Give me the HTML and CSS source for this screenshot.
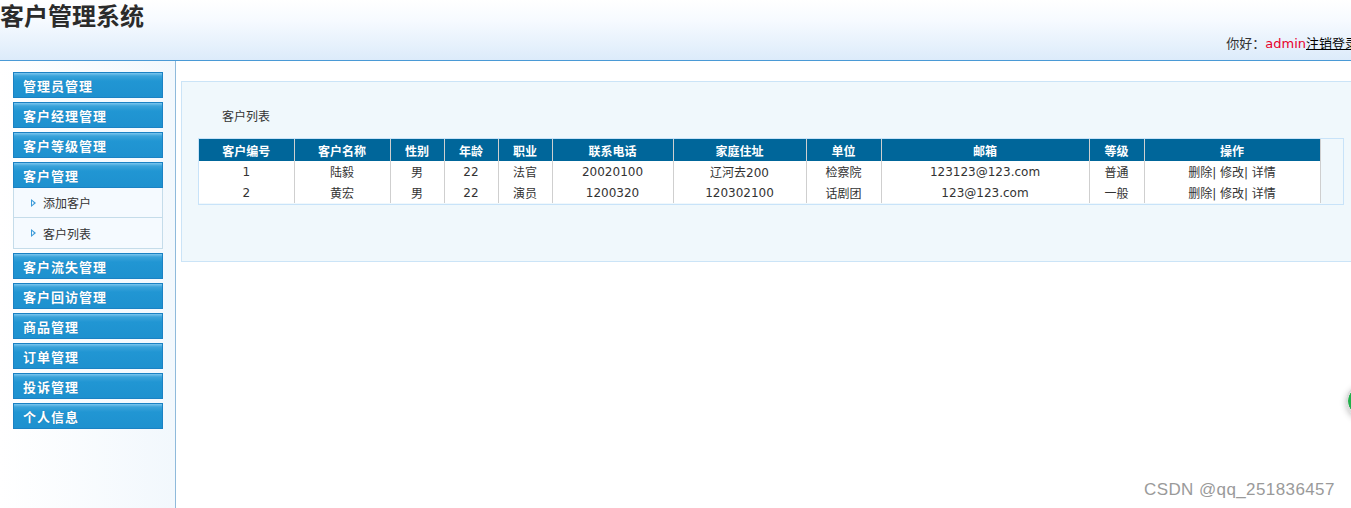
FILE: index.html
```html
<!DOCTYPE html>
<html lang="zh">
<head>
<meta charset="utf-8">
<title>客户管理系统</title>
<link rel="stylesheet" href="styles.css">
</head>
<body>
<div class="header">
  <h1 class="title">客户管理系统</h1>
  <div class="userbar"><span class="userinfo">你好：<span class="uname">admin</span><a class="logout">注销登录</a></span></div>
</div>
<div class="layout">
  <div class="sidebar">
    <div class="menu">管理员管理</div>
    <div class="menu">客户经理管理</div>
    <div class="menu">客户等级管理</div>
    <div class="menu">客户管理</div>
    <div class="submenu">
      <div class="subitem"><span class="tri"></span>添加客户</div>
      <div class="subitem"><span class="tri"></span>客户列表</div>
    </div>
    <div class="menu">客户流失管理</div>
    <div class="menu">客户回访管理</div>
    <div class="menu">商品管理</div>
    <div class="menu">订单管理</div>
    <div class="menu">投诉管理</div>
    <div class="menu">个人信息</div>
  </div>
  <div class="main">
    <div class="panel">
      <div class="panel-title">客户列表</div>
      <div class="tablewrap">
        <table class="grid">
          <colgroup>
            <col class="c95"><col class="c96"><col class="c54"><col class="c54"><col class="c54"><col class="c121"><col class="c133"><col class="c75"><col class="c208"><col class="c55"><col class="c176">
          </colgroup>
          <thead>
            <tr><th>客户编号</th><th>客户名称</th><th>性别</th><th>年龄</th><th>职业</th><th>联系电话</th><th>家庭住址</th><th>单位</th><th>邮箱</th><th>等级</th><th>操作</th></tr>
          </thead>
          <tbody>
            <tr><td>1</td><td>陆毅</td><td>男</td><td>22</td><td>法官</td><td>20020100</td><td>辽河去200</td><td>检察院</td><td>123123@123.com</td><td>普通</td><td>删除| 修改| 详情</td></tr>
            <tr><td>2</td><td>黄宏</td><td>男</td><td>22</td><td>演员</td><td>1200320</td><td>120302100</td><td>话剧团</td><td>123@123.com</td><td>一般</td><td>删除| 修改| 详情</td></tr>
          </tbody>
        </table>
      </div>
    </div>
  </div>
</div>
<div class="floatbtn"></div>
<div class="watermark">CSDN @qq_251836457</div>
</body>
</html>
```
FILE: styles.css
```css
html, body {
  margin: 0;
  padding: 0;
  height: 100%;
  overflow: hidden;
}
body {
  font-family: "DejaVu Sans", "Noto Sans CJK SC", sans-serif;
  font-size: 12px;
  color: #333;
  background: #fff;
  position: relative;
}
.header {
  height: 60px;
  border-bottom: 1px solid #4a9ad6;
  background: linear-gradient(#ffffff 0%, #f6faff 35%, #dcebfa 100%);
  overflow: hidden;
  display: flex;
  flex-direction: column;
}
.title {
  margin: 0;
  padding-top: 1px;
  font-family: "Noto Sans CJK SC", sans-serif;
  font-size: 24px;
  font-weight: bold;
  line-height: 28px;
  color: #2b2b2b;
}
.userbar {
  display: flex;
  justify-content: flex-end;
  margin-top: 5px;
  white-space: nowrap;
}
.userinfo {
  font-family: "Noto Sans CJK SC", sans-serif;
  font-size: 13px;
  line-height: 18px;
  color: #333;
  margin-right: -7px;
}
.uname {
  font-family: "DejaVu Sans", sans-serif;
  color: #e8002c;
  font-size: 13px;
}
.logout {
  color: #000;
  text-decoration: underline;
}
.layout {
  display: flex;
  height: calc(100% - 61px);
}
.sidebar {
  width: 162px;
  flex: none;
  padding: 11px 0 0 13px;
  border-right: 1px solid #8fbadb;
  background: linear-gradient(to right, #ffffff 0%, #f2f8fd 100%);
  display: flex;
  flex-direction: column;
  gap: 4px;
}
.menu {
  height: 24px;
  width: 139px;
  border: 1px solid #1b82c4;
  background: linear-gradient(#7cc6ee 0px, #3aa3da 3px, #2196d3 8px, #1e91cf 100%);
  color: #fff;
  font-family: "Noto Sans CJK SC", sans-serif;
  font-weight: bold;
  font-size: 13px;
  letter-spacing: 1px;
  line-height: 26px;
  padding-left: 9px;
  text-shadow: 0 0 1px rgba(0, 40, 90, 0.35);
}
.submenu {
  width: 148px;
  border: 1px solid #c5dcea;
  border-top: none;
  margin-top: -4px;
  background: #f5faff;
}
.subitem {
  height: 29px;
  line-height: 29px;
  border-bottom: 1px solid #c5dcea;
  font-family: "Noto Sans CJK SC", sans-serif;
  font-size: 12px;
  color: #333;
  padding-left: 17px;
  display: flex;
  align-items: center;
}
.subitem:last-child {
  border-bottom: none;
  height: 30px;
}
.tri {
  width: 0;
  height: 0;
  border-top: 4px solid transparent;
  border-bottom: 4px solid transparent;
  border-left: 5px solid #3a9ad8;
  margin-right: 7px;
  position: relative;
}
.tri::after {
  content: "";
  position: absolute;
  left: -4px;
  top: -2px;
  border-top: 2px solid transparent;
  border-bottom: 2px solid transparent;
  border-left: 2px solid #f5faff;
}
.main {
  flex: 1;
  padding: 20px 0 0 5px;
  overflow: hidden;
}
.panel {
  width: 1190px;
  height: 179px;
  border: 1px solid #cbe4f7;
  background: #f0f8fc;
}
.panel-title {
  font-family: "Noto Sans CJK SC", sans-serif;
  font-size: 12px;
  line-height: 16px;
  padding: 26px 0 0 40px;
  height: 30px;
}
.tablewrap {
  margin-left: 16px;
  width: 1144px;
  height: 65px;
  border: 1px solid #c8e3f9;
  background: #f0f8fc;
}
.grid {
  border-collapse: collapse;
  table-layout: fixed;
  width: 1121px;
  background: #fff;
}
.c95 { width: 95px; }
.c96 { width: 96px; }
.c54 { width: 54px; }
.c121 { width: 121px; }
.c133 { width: 133px; }
.c75 { width: 75px; }
.c208 { width: 208px; }
.c55 { width: 55px; }
.c176 { width: 176px; }
.grid th {
  background: #00669a;
  color: #fff;
  font-family: "Noto Sans CJK SC", sans-serif;
  font-weight: bold;
  font-size: 12px;
  height: 22px;
  padding: 0;
  border-right: 1px solid #cfcfcf;
  text-align: center;
}
.grid td {
  height: 21px;
  padding: 0;
  text-align: center;
  font-size: 12px;
  border-right: 1px solid #cfcfcf;
  color: #333;
  white-space: nowrap;
}
.floatbtn {
  position: absolute;
  left: 1346px;
  top: 384px;
  width: 30px;
  height: 30px;
  border-radius: 50%;
  border: 2px solid #dcdcdc;
  background: radial-gradient(circle at 45% 50%, #21b04b 0 60%, #ffffff 62%);
  box-shadow: 0 2px 6px rgba(0,0,0,0.25);
}
.watermark {
  position: absolute;
  left: 1144px;
  top: 480px;
  font-family: "Liberation Sans", sans-serif;
  font-size: 17px;
  letter-spacing: 0.4px;
  color: #9a9a9a;
  white-space: nowrap;
}
```
